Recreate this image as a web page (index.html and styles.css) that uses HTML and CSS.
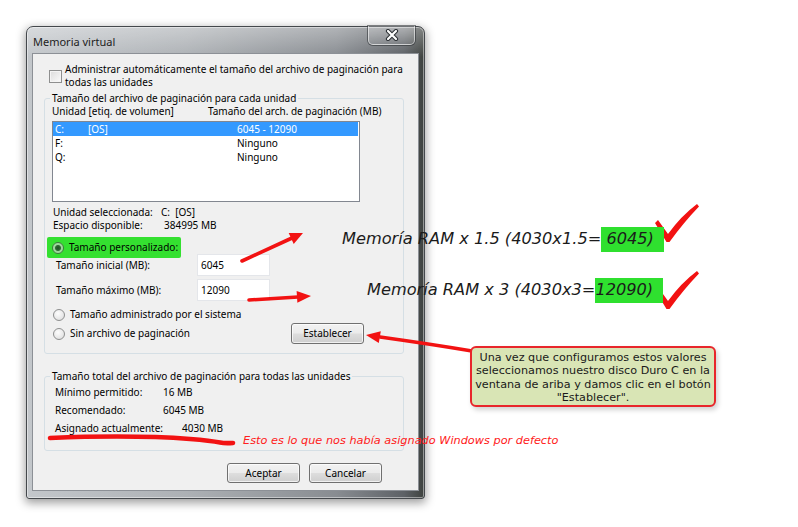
FILE: index.html
```html
<!DOCTYPE html>
<html lang="es">
<head>
    <meta charset="UTF-8">
    <meta name="viewport" content="width=device-width, initial-scale=1.0">
    <title>Memoria virtual</title>
    <link rel="stylesheet" href="styles.css">
</head>
<body>
    <div class="scene">
        <!-- ventana de diálogo -->
        <div class="window">
            <div class="titlebar">
                <span class="title">Memoria virtual</span>
                <button class="close" type="button" aria-label="Cerrar">
                    <svg width="14" height="12" viewBox="0 0 14 12">
                        <path d="M3 2 L11 10 M11 2 L3 10" stroke="#2b2f33" stroke-width="4.2" stroke-linecap="round"/>
                        <path d="M3 2 L11 10 M11 2 L3 10" stroke="#fff" stroke-width="2.2" stroke-linecap="round"/>
                    </svg>
                </button>
            </div>
            <div class="panel">
                <label class="check-row">
                    <span class="checkbox"></span>
                    <span>Administrar automáticamente el tamaño del archivo de paginación para<br>todas las unidades</span>
                </label>

                <fieldset class="group">
                    <legend>Tamaño del archivo de paginación para cada unidad</legend>
                    <div class="list-head">
                        <span>Unidad [etiq. de volumen]</span>
                        <span>Tamaño del arch. de paginación (MB)</span>
                    </div>
                    <div class="listbox">
                        <div class="drive selected"><span>C:</span><span>[OS]</span><span>6045 - 12090</span></div>
                        <div class="drive"><span>F:</span><span></span><span>Ninguno</span></div>
                        <div class="drive"><span>Q:</span><span></span><span>Ninguno</span></div>
                    </div>
                    <div class="info">
                        <span>Unidad seleccionada:</span><span>C:&nbsp;&nbsp;[OS]</span>
                        <span>Espacio disponible:</span><span class="space">384995 MB</span>
                    </div>
                    <div class="radio-row">
                        <span class="marker"><span class="radio on"></span>Tamaño personalizado:</span>
                    </div>
                    <div class="field">
                        <span>Tamaño inicial (MB):</span>
                        <input class="textbox" type="text" value="6045">
                    </div>
                    <div class="field">
                        <span>Tamaño máximo (MB):</span>
                        <input class="textbox" type="text" value="12090">
                    </div>
                    <div class="options">
                        <div class="radio-row"><span class="radio"></span>Tamaño administrado por el sistema</div>
                        <div class="radio-row last">
                            <span class="radio-label"><span class="radio"></span>Sin archivo de paginación</span>
                            <button class="btn" type="button">Establecer</button>
                        </div>
                    </div>
                </fieldset>

                <fieldset class="group totals">
                    <legend>Tamaño total del archivo de paginación para todas las unidades</legend>
                    <div class="total-row"><span>Mínimo permitido:</span><span>16 MB</span></div>
                    <div class="total-row"><span>Recomendado:</span><span>6045 MB</span></div>
                    <div class="total-row wide"><span>Asignado actualmente:</span><span>4030 MB</span></div>
                </fieldset>

                <div class="actions">
                    <button class="btn" type="button">Aceptar</button>
                    <button class="btn" type="button">Cancelar</button>
                </div>
            </div>
        </div>

        <!-- anotaciones -->
        <svg class="marks" width="798" height="527" viewBox="0 0 798 527">
            <g stroke="#f21212" stroke-linecap="round" fill="none">
                <path d="M242 261 L292 238" stroke-width="3.6"/>
                <path d="M249 300 L298 297" stroke-width="3.6"/>
                <path d="M472 351 Q430 344 380 337" stroke-width="3.4"/>
                <path d="M50 438 C100 436 150 436 190 439 S215 444 233 443" stroke-width="4.6"/>
            </g>
            <g fill="#f21212">
                <polygon points="303,233 293.7,243.9 288.7,233.1"/>
                <polygon points="311,296 297.4,302.8 296.6,290.9"/>
                <polygon points="366,335 380.8,331.2 378.8,343"/>
                <path d="M655 223 L658 220 L668 234 Q681 216 697 204 L699 206.5 Q684 222 669.5 242 L666.5 242 Z"/>
                <path d="M655 290 L658 287 L668 301 Q681 283 697 271 L699 273.5 Q684 289 669.5 309 L666.5 309 Z"/>
            </g>
        </svg>
        <p class="note note-one">Memoría RAM x 1.5 (4030x1.5=<mark>&nbsp;6045)</mark></p>
        <p class="note note-two">Memoría RAM x 3 (4030x3=<mark>12090)</mark></p>
        <div class="callout">Una vez que configuramos estos valores<br>seleccionamos nuestro disco Duro C en la<br>ventana de ariba y damos clic en el botón<br>"Establecer".</div>
        <p class="remark">Esto es lo que nos había asignado Windows por defecto</p>
    </div>
</body>
</html>
```
FILE: styles.css
```css
* { box-sizing: border-box; }
body {
    margin: 0;
    background: #fff;
    font-family: "Noto Sans", "Open Sans", sans-serif;
}
.scene {
    position: relative;
    width: 798px;
    height: 527px;
    padding: 26px 0 0 26px;
    overflow: hidden;
}

/* marco de la ventana */
.window {
    width: 399px;
    padding: 0 5px 7px 5px;
    border: 1px solid #44484c;
    border-radius: 7px 7px 3px 3px;
    background:
        linear-gradient(180deg, rgba(255,255,255,0.35), rgba(255,255,255,0) 30px),
        linear-gradient(90deg, #c3c7cb 0%, #adb1b5 40%, #888c91 78%, #5d6166 95%, #3e423f 100%);
    box-shadow: 0 3px 10px 1px rgba(0,0,0,0.38), inset 0 0 0 1px rgba(255,255,255,0.45);
}
.titlebar {
    display: flex;
    align-items: flex-start;
    height: 26px;
    padding-left: 1px;
}
.title {
    padding-top: 7px;
    line-height: 15px;
    font-size: 11px;
    color: #1c1c1c;
}
.close {
    margin: -1px 4px 0 auto;
    width: 47px;
    height: 19px;
    padding: 0;
    border: 1px solid rgba(255,255,255,0.55);
    border-top: none;
    border-radius: 0 0 5px 5px;
    background: linear-gradient(180deg, rgba(255,255,255,0.25), rgba(255,255,255,0.05));
    box-shadow: 0 0 0 1px rgba(40,44,48,0.55);
    display: flex;
    align-items: center;
    justify-content: center;
}

/* contenido */
.panel {
    background: #f0f0f0;
    border: 1px solid #8c9096;
    padding: 9px 0 7px 0;
    font-size: 10px;
    color: #000;
}
.check-row {
    display: flex;
    align-items: center;
    padding-left: 16px;
    line-height: 13px;
}
.checkbox {
    width: 13px;
    height: 13px;
    margin-right: 3px;
    border: 1px solid #8e8f8f;
    background: linear-gradient(135deg, #dcdcdc, #fbfbfb);
    box-shadow: inset 0 0 0 1px #f4f4f4;
    flex: none;
}
.group {
    margin: 3px 14px 0 11px;
    padding: 0 7px 9px 7px;
    border: 1px solid #d5dfe5;
    border-radius: 3px;
    min-width: 0;
    line-height: 13px;
}
.group legend {
    padding: 0 2px;
    margin-left: -2px;
    line-height: 13px;
}
.list-head {
    display: grid;
    grid-template-columns: 156px auto;
}
.listbox {
    margin-top: 3px;
    width: 308px;
    height: 81px;
    border: 1px solid #828790;
    background: #fff;
}
.drive {
    display: grid;
    grid-template-columns: 33px 149px auto;
    padding-left: 2px;
    margin-right: 1px;
    line-height: 14px;
}
.drive.selected {
    background: #3399ff;
    color: #fff;
}
.info {
    margin-top: 4px;
    display: grid;
    grid-template-columns: 108px auto;
    padding-left: 1px;
}
.info .space { padding-left: 3px; }
.radio-row {
    display: flex;
    align-items: center;
    margin-top: 9px;
}
.radio {
    width: 12px;
    height: 12px;
    margin-right: 5px;
    border-radius: 50%;
    border: 1px solid #8e8f8f;
    background: radial-gradient(circle at 40% 35%, #fdfdfd, #dadada);
    flex: none;
}
.radio.on {
    border-color: #3e7a3e;
    background: radial-gradient(circle, #1f4d24 0, #2f6a33 2.5px, #9ad69a 3.5px, #b6e8b0 100%);
}
.marker {
    display: inline-flex;
    align-items: center;
    margin: -4px 0 -4px -5px;
    padding: 4px 3px 4px 5px;
    background: #34e030;
    border-radius: 2px;
}
.field {
    display: grid;
    grid-template-columns: 141px 73px;
    align-items: center;
    height: 22px;
    padding-left: 4px;
}
.field + .field { margin-top: 3px; }
.textbox {
    width: 73px;
    height: 22px;
    padding: 0 3px;
    border: 1px solid #e4e6ea;
    background: #fff;
    font: inherit;
    color: #000;
    outline: none;
}
.options { margin-top: 7px; }
.options .radio-row { margin-top: 0; padding-left: 1px; }
.options .radio-row.last { margin-top: 2px; }
.radio-label {
    display: flex;
    align-items: center;
    width: 238px;
}
.btn {
    width: 73px;
    height: 21px;
    padding: 0;
    border: 1px solid #707070;
    border-radius: 3px;
    background: linear-gradient(180deg, #f2f2f2 0%, #ebebeb 48%, #dddddd 52%, #cfcfcf 100%);
    box-shadow: inset 0 0 0 1px rgba(255,255,255,0.7);
    font: inherit;
    color: #000;
}
.totals {
    margin-top: 16px;
    padding-bottom: 13px;
}
.total-row {
    display: grid;
    grid-template-columns: 108px auto;
    padding-left: 3px;
    line-height: 18px;
}
.total-row.wide { grid-template-columns: 127px auto; }
.actions {
    display: flex;
    justify-content: flex-end;
    gap: 9px;
    margin-top: 12px;
    padding-right: 36px;
}
.actions .btn { height: 20px; }

/* notas encima de la captura */
.marks {
    position: absolute;
    left: 0;
    top: 0;
    pointer-events: none;
}
.note {
    position: absolute;
    margin: 0;
    font-family: "DejaVu Sans", "Liberation Sans", sans-serif;
    font-style: italic;
    font-size: 16.2px;
    line-height: 18px;
    color: #1b1b1b;
    white-space: nowrap;
}
.note mark {
    display: inline-block;
    background: #2fe02f;
    color: inherit;
    padding: 3px 10px 4px 0;
    margin: -3px 0 -4px 0;
}
.note-one { left: 342px; top: 230px; }
.note-two { left: 367px; top: 281px; }
.callout {
    position: absolute;
    left: 470px;
    top: 346px;
    width: 246px;
    height: 61px;
    padding-top: 3px;
    border: 2px solid #e8262b;
    border-radius: 6px;
    background: #d9e5b5;
    box-shadow: 2px 3px 5px rgba(0,0,0,0.18);
    font-family: "DejaVu Sans", "Liberation Sans", sans-serif;
    font-size: 11.2px;
    line-height: 13.3px;
    text-align: center;
    color: #1a1a1a;
    white-space: nowrap;
}
.remark {
    position: absolute;
    left: 243px;
    top: 434px;
    margin: 0;
    font-family: "DejaVu Sans", "Liberation Sans", sans-serif;
    font-style: italic;
    font-size: 11.3px;
    line-height: 14px;
    color: #ff2020;
    white-space: nowrap;
}
```
